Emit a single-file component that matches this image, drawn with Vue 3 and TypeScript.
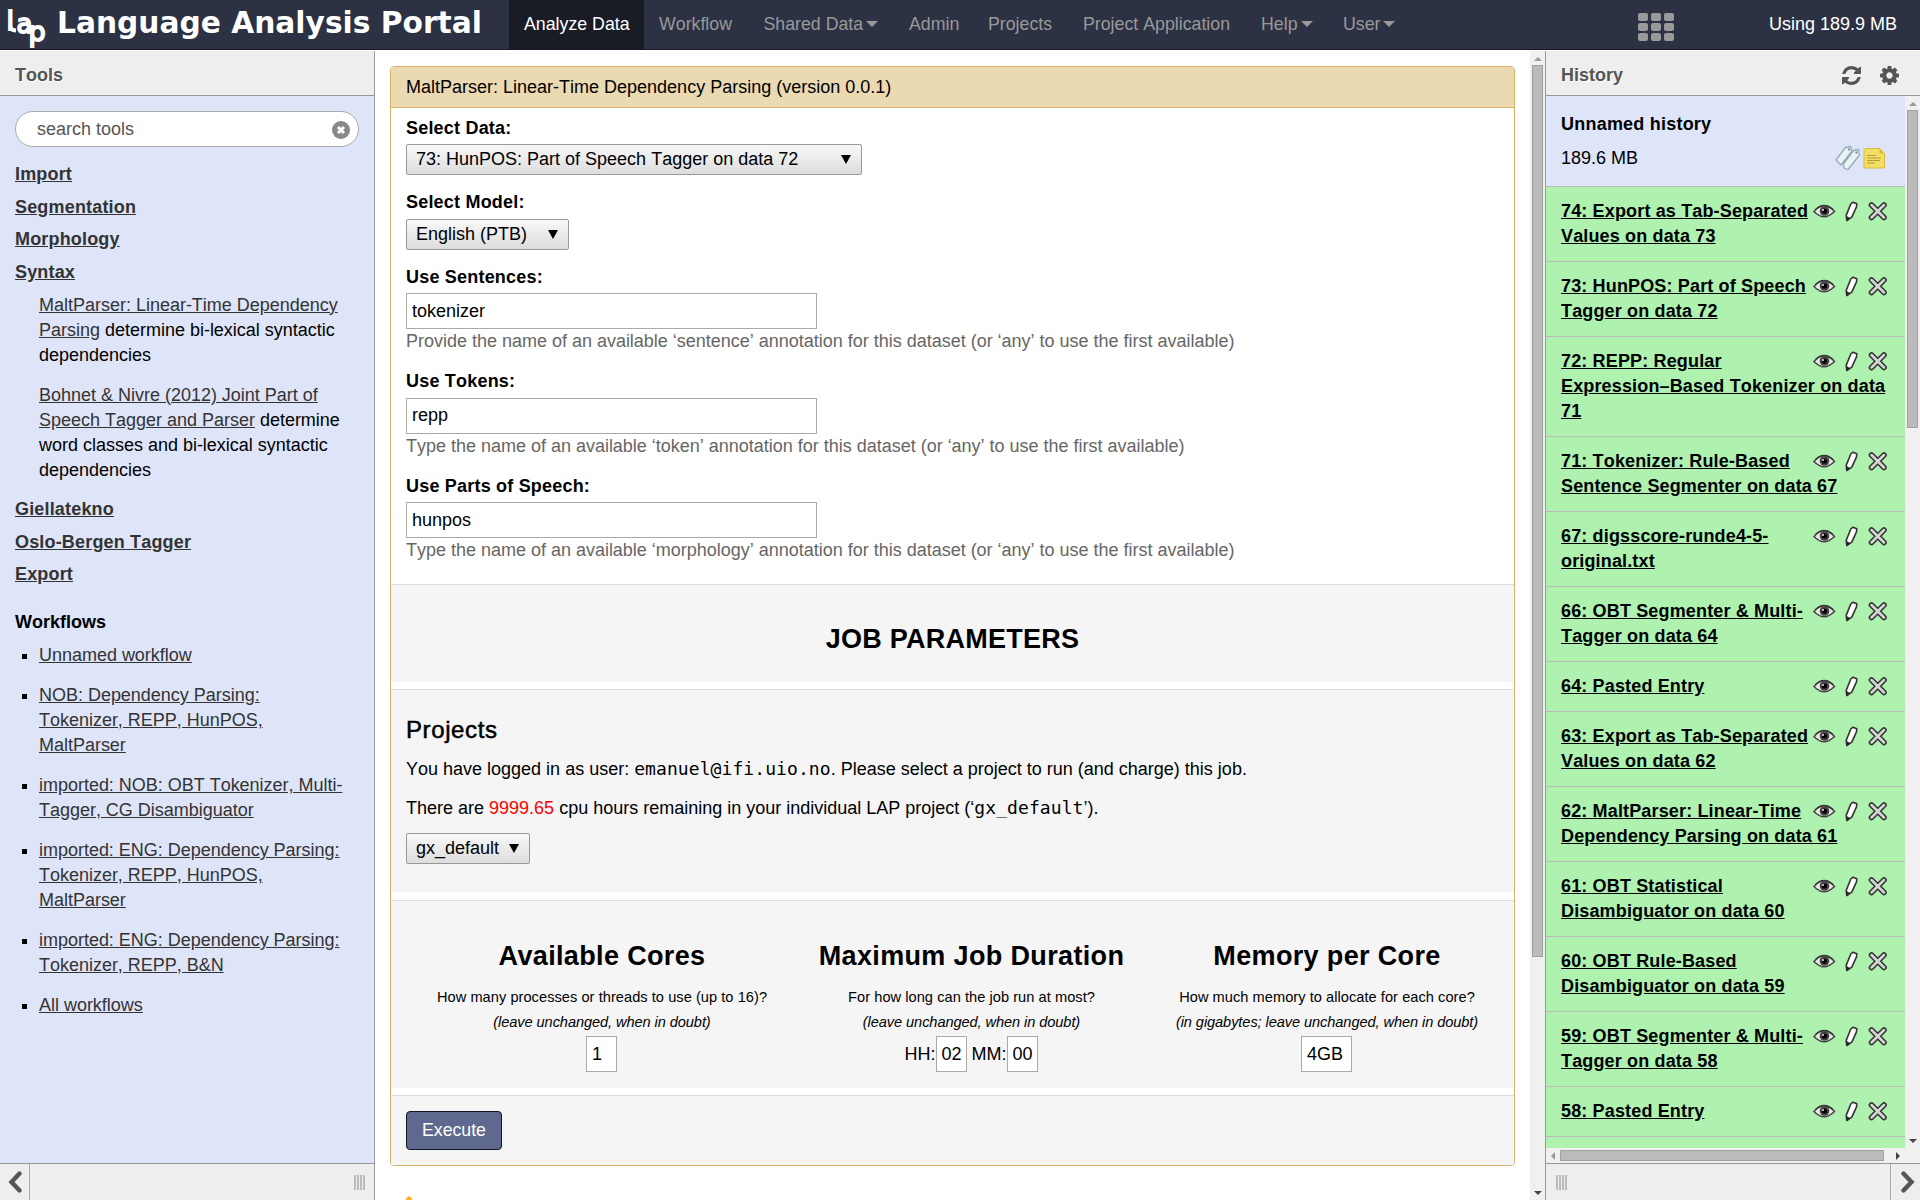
<script setup lang="ts">
interface NavItem { label: string; width: number; active?: boolean; caret?: boolean }
interface HistoryItem { id: number; name: string }

const nav: NavItem[] = [
  { label: 'Analyze Data', width: 135, active: true },
  { label: 'Workflow', width: 104.5 },
  { label: 'Shared Data', width: 145.5, caret: true },
  { label: 'Admin', width: 79 },
  { label: 'Projects', width: 95 },
  { label: 'Project Application', width: 178 },
  { label: 'Help', width: 82, caret: true },
  { label: 'User', width: 90, caret: true },
]

const sectionsTop = ['Import', 'Segmentation', 'Morphology', 'Syntax']
const sectionsBottom = ['Giellatekno', 'Oslo-Bergen Tagger', 'Export']
const tools = [
  { name: 'MaltParser: Linear-Time Dependency Parsing', text: 'determine bi-lexical syntactic dependencies' },
  { name: 'Bohnet & Nivre (2012) Joint Part of Speech Tagger and Parser', text: 'determine word classes and bi-lexical syntactic dependencies' },
]
const workflows = [
  'Unnamed workflow',
  'NOB: Dependency Parsing: Tokenizer, REPP, HunPOS, MaltParser',
  'imported: NOB: OBT Tokenizer, Multi-Tagger, CG Disambiguator',
  'imported: ENG: Dependency Parsing: Tokenizer, REPP, HunPOS, MaltParser',
  'imported: ENG: Dependency Parsing: Tokenizer, REPP, B&N',
  'All workflows',
]
const fields = [
  { label: 'Use Sentences:', value: 'tokenizer', help: 'Provide the name of an available ‘sentence’ annotation for this dataset (or ‘any’ to use the first available)' },
  { label: 'Use Tokens:', value: 'repp', help: 'Type the name of an available ‘token’ annotation for this dataset (or ‘any’ to use the first available)' },
  { label: 'Use Parts of Speech:', value: 'hunpos', help: 'Type the name of an available ‘morphology’ annotation for this dataset (or ‘any’ to use the first available)' },
]
const history: HistoryItem[] = [
  { id: 74, name: 'Export as Tab-Separated Values on data 73' },
  { id: 73, name: 'HunPOS: Part of Speech Tagger on data 72' },
  { id: 72, name: 'REPP: Regular Expression–Based Tokenizer on data 71' },
  { id: 71, name: 'Tokenizer: Rule-Based Sentence Segmenter on data 67' },
  { id: 67, name: 'digsscore-runde4-5-original.txt' },
  { id: 66, name: 'OBT Segmenter & Multi-Tagger on data 64' },
  { id: 64, name: 'Pasted Entry' },
  { id: 63, name: 'Export as Tab-Separated Values on data 62' },
  { id: 62, name: 'MaltParser: Linear-Time Dependency Parsing on data 61' },
  { id: 61, name: 'OBT Statistical Disambiguator on data 60' },
  { id: 60, name: 'OBT Rule-Based Disambiguator on data 59' },
  { id: 59, name: 'OBT Segmenter & Multi-Tagger on data 58' },
  { id: 58, name: 'Pasted Entry' },
]
</script>

<template>
  <div class="app">
    <header class="masthead">
      <svg class="logo" width="48" height="46" viewBox="0 0 48 46">
        <g fill="#fff" stroke="#fff" stroke-width="1.8" font-family="DejaVu Sans">
          <text x="4.500" y="27" font-size="27">l</text>
          <text x="14.500" y="30" font-size="26">a</text>
          <text x="26.500" y="38" font-size="27">p</text>
        </g>
        <path d="M8.500 23q0 4.500 5.500 4.500" fill="none" stroke="#fff" stroke-width="4" />
      </svg>
      <span class="brand">Language Analysis Portal</span>
      <nav class="nav">
        <a v-for="n in nav" :key="n.label" class="nav-item" :class="{ active: n.active }" :style="{ width: n.width + 'px' }">{{ n.label }}<i v-if="n.caret" class="caret"></i></a>
      </nav>
      <div class="apps"><i v-for="k in 9" :key="k"></i></div>
      <span class="quota">Using 189.9 MB</span>
    </header>

    <div class="body">
      <aside class="left">
        <div class="panel-head">Tools</div>
        <div class="left-body">
          <div class="search">
            <span>search tools</span>
            <svg width="18" height="18" viewBox="0 0 18 18"><circle cx="9" cy="9" r="9" fill="#888" /><path d="M6 6l6 6M12 6l-6 6" stroke="#fff" stroke-width="3" /></svg>
          </div>
          <a v-for="s in sectionsTop" :key="s" class="section">{{ s }}</a>
          <div class="tools">
            <p v-for="t in tools" :key="t.name"><a>{{ t.name }}</a> {{ t.text }}</p>
          </div>
          <a v-for="s in sectionsBottom" :key="s" class="section">{{ s }}</a>
          <div class="wf-title">Workflows</div>
          <ul class="workflows">
            <li v-for="w in workflows" :key="w"><a>{{ w }}</a></li>
          </ul>
        </div>
        <div class="panel-foot">
          <div class="collapse"><svg width="14" height="22" viewBox="0 0 14 22"><path d="M11.5 2.5L3.5 11l8 8.500" fill="none" stroke="#555" stroke-width="4.400" stroke-linecap="round" /></svg></div>
          <div class="grip"></div>
        </div>
      </aside>

      <main class="center">
        <div class="content">
          <section class="card">
            <div class="card-head">MaltParser: Linear-Time Dependency Parsing (version 0.0.1)</div>
            <div class="form">
              <label>Select Data:</label>
              <div class="select s1"><span>73: HunPOS: Part of Speech Tagger on data 72</span><i></i></div>
              <label>Select Model:</label>
              <div class="select s2"><span>English (PTB)</span><i></i></div>
              <template v-for="f in fields" :key="f.label">
                <label>{{ f.label }}</label>
                <input class="text" type="text" :value="f.value">
                <p class="help">{{ f.help }}</p>
              </template>
            </div>
            <div class="band job"><h2>JOB PARAMETERS</h2></div>
            <div class="band projects">
              <h3>Projects</h3>
              <p>You have logged in as user: <code>emanuel@ifi.uio.no</code>. Please select a project to run (and charge) this job.</p>
              <p>There are <em>9999.65</em> cpu hours remaining in your individual LAP project (‘<code>gx_default</code>’).</p>
              <div class="select s3"><span>gx_default</span><i></i></div>
            </div>
            <div class="band params">
              <div class="param">
                <h2>Available Cores</h2>
                <small>How many processes or threads to use (up to 16)?</small>
                <small class="it">(leave unchanged, when in doubt)</small>
                <div class="boxes"><input class="text w31" value="1"></div>
              </div>
              <div class="param">
                <h2>Maximum Job Duration</h2>
                <small>For how long can the job run at most?</small>
                <small class="it">(leave unchanged, when in doubt)</small>
                <div class="boxes"><span>HH:</span><input class="text w31" value="02"><span class="mm">MM:</span><input class="text w31" value="00"></div>
              </div>
              <div class="param">
                <h2>Memory per Core</h2>
                <small>How much memory to allocate for each core?</small>
                <small class="it">(in gigabytes; leave unchanged, when in doubt)</small>
                <div class="boxes"><input class="text w51" value="4GB"></div>
              </div>
            </div>
            <div class="band run"><button>Execute</button></div>
          </section>
          <svg class="warn" width="32" height="28" viewBox="0 0 32 28"><path d="M14 1.5q2-2.4 4 0l13 23q1 3-2 3H3q-3 0-2-3z" fill="#ffb320" /></svg>
        </div>
        <div class="vbar">
          <i class="up"></i><div class="thumb t-main"></div><i class="down"></i>
        </div>
      </main>

      <aside class="right">
        <div class="panel-head">
          <span>History</span>
          <svg class="hi" width="19" height="19" viewBox="0 0 1536 1536"><path fill="#555" d="M1511 928q0 5-1 7-64 268-268 434.5t-478 166.5q-146 0-282.5-55t-243.5-157l-129 129q-19 19-45 19t-45-19-19-45v-448q0-26 19-45t45-19h448q26 0 45 19t19 45-19 45l-137 137q71 66 161 102t187 36q134 0 250-65t186-179q11-17 53-117 8-23 30-23h192q13 0 22.5 9.5t9.5 22.5zm25-800v448q0 26-19 45t-45 19h-448q-26 0-45-19t-19-45 19-45l138-138q-148-137-349-137-134 0-250 65t-186 179q-11 17-53 117-8 23-30 23h-199q-13 0-22.5-9.5t-9.5-22.5v-7q65-268 270-434.5t480-166.5q146 0 284 55.5t245 156.5l130-129q19-19 45-19t45 19 19 45z" /></svg>
          <svg class="hi" width="19" height="19" viewBox="0 0 1536 1536"><path fill="#555" d="M1024 768q0-106-75-181t-181-75-181 75-75 181 75 181 181 75 181-75 75-181zm512-109v222q0 12-8 23t-20 13l-185 28q-19 54-39 91 35 50 107 138 10 12 10 25t-9 23q-27 37-99 108t-94 71q-12 0-26-9l-138-108q-44 23-91 38-16 136-29 186-7 28-36 28h-222q-14 0-24.5-8.5t-11.5-21.5l-28-184q-49-16-90-37l-141 107q-10 9-25 9-14 0-25-11-126-114-165-168-7-10-7-23 0-12 8-23 15-21 51-66.5t54-70.5q-27-50-41-99l-183-27q-13-2-21-12.5t-8-23.5v-222q0-12 8-23t19-13l186-28q14-46 39-92-40-57-107-138-10-12-10-24 0-10 9-23 26-36 98.5-107.5t94.5-71.5q13 0 26 10l138 107q44-23 91-38 16-136 29-186 7-28 36-28h222q14 0 24.5 8.5t11.5 21.5l28 184q49 16 90 37l142-107q9-9 24-9 13 0 25 10 129 119 165 170 7 8 7 22 0 12-8 23-15 21-51 66.5t-54 70.5q26 50 41 98l183 28q13 2 21 12.5t8 23.5z" /></svg>
        </div>
        <div class="right-body">
          <div class="hist">
            <div class="hist-head">
              <b>Unnamed history</b>
              <div class="size"><span>189.6 MB</span>
                <svg width="50" height="28" viewBox="0 0 50 28">
                  <g fill="#e9f3f4" stroke="#93abb5" stroke-width="1.3" stroke-linejoin="round">
                    <path d="M1 16L10.500 3.500 15.500 2.500 17 7 6 21z" />
                    <path d="M8 20.500L18.500 6.500l5-1 1 5.500L13 25.500 9.500 24.500z" />
                  </g>
                  <circle cx="14" cy="5.500" r="1.200" fill="#7f9aa5" /><circle cx="21.500" cy="8.500" r="1.200" fill="#7f9aa5" />
                  <path d="M30 4.500h14.500l5 5V24H29V5.500z" fill="#f2de63" stroke="#d9b93f" />
                  <path d="M44.500 4.500v5h5z" fill="#d9bb3c" />
                  <path d="M32 11.500h9M32 14h14M32 16.500h13M32 19h8" stroke="#b59c3c" stroke-width="1" />
                </svg>
              </div>
            </div>
            <div v-for="h in history" :key="h.id" class="item">
              <svg class="acts" width="78" height="22" viewBox="0 0 78 22">
                <path d="M2 11.500Q12 0 22.500 11.500Q12 22 2 11.500z" fill="#e8e8e8" stroke="#444" stroke-width="1.500" />
                <path d="M3.500 9.500Q12 1.500 21 9.500" fill="none" stroke="#333" stroke-width="1.600" />
                <circle cx="12.500" cy="11" r="4.800" fill="#444" /><circle cx="12.500" cy="11" r="2.600" fill="#000" /><circle cx="11" cy="10" r="1.100" fill="#ddd" />
                <path d="M41 2.200l3.800 1.600-.3 3-4.700 10.400-5 3.400-.6-5.200L38.800 4z" fill="#fff" stroke="#333" stroke-width="1.600" stroke-linejoin="round" />
                <path d="M34.500 16l3.500 2-3 2.300z" fill="#222" />
                <path d="M59.500 5l12.500 12.500M72 5L59.500 17.500" stroke="#333" stroke-width="5.600" stroke-linecap="round" />
                <path d="M59.500 5l12.500 12.500M72 5L59.500 17.500" stroke="#d6d6d6" stroke-width="2.500" stroke-linecap="round" />
              </svg>
              <a>{{ h.id }}: {{ h.name }}</a>
            </div>
          </div>
          <div class="vbar side"><i class="up"></i><div class="thumb t-side"></div><i class="down"></i></div>
        </div>
        <div class="hbar"><i class="lt"></i><div class="hthumb"></div><i class="rt"></i></div>
        <div class="panel-foot rfoot">
          <div class="grip"></div>
          <div class="collapse"><svg width="14" height="22" viewBox="0 0 14 22"><path d="M2.500 2.500l8 8.500-8 8.500" fill="none" stroke="#555" stroke-width="4.400" stroke-linecap="round" /></svg></div>
        </div>
      </aside>
    </div>
  </div>
</template>

<style>
html, body { margin: 0; overflow: hidden; }
</style>

<style scoped>
* { box-sizing: border-box; }
.app { width: 1920px; height: 1200px; overflow: hidden; display: flex; flex-direction: column; background: #fff; color: #000; font: 18px/25px "Liberation Sans", Arial, sans-serif; font-kerning: none; }
p, h2, h3, ul { margin: 0; padding: 0; }
.masthead { height: 50px; flex: none; margin-bottom: 1px; background: #2c3143; border-bottom: 1px solid #191b25; display: flex; align-items: flex-start; }
.logo { margin: 3px 0 0 2px; flex: none; }
.brand { width: 452px; margin-left: 7px; flex: none; font: bold 29.700px/36px "DejaVu Sans", sans-serif; color: #fff; padding-top: 5px; white-space: nowrap; }
.nav { display: flex; }
.nav-item { height: 49px; padding: 12px 0 0 15px; color: #999; white-space: nowrap; font-size: 17.750px; }
.nav-item.active { background: #191b25; color: #fff; }
.caret { display: inline-block; border: 6px solid transparent; border-top-color: #999; border-bottom: 0; margin-left: 3px; vertical-align: 3px; }
.apps { display: grid; grid-template-columns: repeat(3, 10px); grid-auto-rows: 8px; gap: 2px 3px; margin: 13px 0 0 220px; }
.apps i { background: #999; border-radius: 2px; }
.quota { margin: 12px 23px 0 auto; color: #fff; }

.body { display: flex; height: 1149px; }
.left { width: 375px; border-right: 1px solid #999; display: flex; flex-direction: column; background: #dfe5f9; }
.panel-head { height: 45px; flex: none; background: #eee; border-bottom: 1px solid #999; padding: 12px 15px 0; font-weight: bold; color: #555; text-shadow: 1px 1px 0 #fff; display: flex; }
.left-body { flex: 1; padding: 15px; font-size: 18px; min-height: 0; }
.search { height: 36px; border: 1px solid #aaa; border-radius: 18px; background: #fff; margin-bottom: 15px; display: flex; align-items: center; justify-content: space-between; padding: 0 8px 0 21px; color: #555; }
.search svg { margin-top: 2px; }
.section { display: block; width: max-content; font-weight: bold; letter-spacing: .17px; margin-bottom: 7.700px; color: #333; text-decoration: underline; }
.tools { padding-left: 24px; width: 333px; margin-bottom: 14.300px; letter-spacing: -.01px; }
.tools p + p { margin-top: 15px; }
.tools a, .workflows a { color: #333; text-decoration: underline; }
.wf-title { font-weight: bold; margin: 22.700px 0 8px; }
.workflows { list-style: none; width: 333px; letter-spacing: -.02px; }
.workflows li { padding-left: 24px; margin-bottom: 15px; position: relative; }
.workflows li::before { content: ""; position: absolute; left: 7px; top: 11px; width: 5px; height: 5px; background: #000; }
.panel-foot { height: 37px; flex: none; border-top: 1px solid #999; background: #eee; display: flex; justify-content: space-between; }
.collapse { width: 30px; border-right: 1px solid #aaa; padding: 7px 0 0 8px; }
.grip { width: 11px; height: 15px; margin: 11px 9px 0; background: repeating-linear-gradient(90deg, #bbb 0 2px, #eee 2px 3px); }
.rfoot .collapse { border-right: 0; border-left: 1px solid #aaa; width: 30px; padding-left: 10px; }
.rfoot .grip { margin-left: 10px; }

.center { width: 1170px; display: flex; }
.content { width: 1155px; padding: 15px; overflow: hidden; }
.card { width: 1125px; height: 1100px; border: 1px solid #d8b365; border-radius: 4px; overflow: hidden; display: flex; flex-direction: column; }
.card-head { height: 41px; flex: none; background: #ebd9b2; border-bottom: 1px solid #d8b365; padding: 8px 15px; }
.form { height: 476px; flex: none; padding: 8px 15px 0; }
label { display: block; font-weight: bold; letter-spacing: .2px; margin-bottom: 3.450px; }
.select { height: 31px; border: 1px solid #999; border-radius: 2px; background: linear-gradient(#f8f8f8, #ddd); display: flex; align-items: center; justify-content: space-between; padding: 0 10px 0 9px; margin-bottom: 15px; white-space: nowrap; }
.select i { border: 5px solid transparent; border-top: 9px solid #000; border-bottom: 0; }
.s1 { width: 456px; }
.s2 { width: 163px; }
.s3 { width: 124px; }
.text { display: block; width: 411px; height: 36px; border: 1px solid #aaa; background: #fff; padding: 0 5px; font: 18px/25px "Liberation Sans", Arial, sans-serif; color: #000; }
.help { color: #666; margin-bottom: 15.100px; white-space: nowrap; letter-spacing: -.01px; }
.band { background: #f5f5f5; border-top: 1px solid #ddd; flex: none; }
h2 { font: bold 27px/34px "Liberation Sans", Arial, sans-serif; text-align: center; letter-spacing: .35px; }
.job { height: 98px; padding-top: 37px; margin-bottom: 7px; }
.job h2 { letter-spacing: .26px; }
.projects { height: 203px; padding: 24px 15px 0; margin-bottom: 8px; }
h3 { font: normal 24px/32px "Liberation Sans", Arial, sans-serif; letter-spacing: .6px; margin-bottom: 11px; -webkit-text-stroke: .5px #000; }
.projects p { margin-bottom: 14px; white-space: nowrap; }
.projects p + p { margin-bottom: 11.500px; }
code { font: 18px/20px "DejaVu Sans Mono", monospace; letter-spacing: .08px; }
em { font-style: normal; color: #f00; }
.params { height: 188px; margin-bottom: 7px; display: grid; grid-template-columns: 392px 347px 364px; padding: 38px 0 0 15px; }
.param { display: flex; flex-direction: column; align-items: center; }
.param h2 { margin-bottom: 12px; }
small { font-size: 14.600px; white-space: nowrap; letter-spacing: .05px; }
small.it { font-style: italic; letter-spacing: -.08px; }
.boxes { display: flex; align-items: center; margin: 1px 1px 0 0; }
.w31 { width: 31px; }
.w51 { width: 51px; }
.mm { margin-left: 5px; }
.run { flex: 1; padding: 15px; }
button { width: 96px; height: 39px; padding: 0; border: 1px solid #111522; border-radius: 4px; background: #5f6990; color: #fff; font: 17.700px/25px "Liberation Sans", Arial, sans-serif; }
.warn { display: block; margin: 30px 0 0 3px; }

.vbar { width: 15px; background: #f0f0f0; display: flex; flex-direction: column; align-items: center; }
.vbar i { border: 4px solid transparent; }
.vbar .up { border-bottom: 4px solid #999; border-top: 0; margin-top: 6px; }
.vbar .down { border-top: 4px solid #444; border-bottom: 0; margin: auto 0 5px; }
.thumb { width: 11px; background: #bbb; border: 1px solid #a0a0a0; margin-top: 4px; }
.t-main { height: 892px; }
.t-side { height: 318px; }

.right { width: 375px; border-left: 1px solid #999; display: flex; flex-direction: column; background: #dfe5f9; }
.right .panel-head span { margin-right: auto; }
.hi { margin: 3px 0 0 19px; }
.right .panel-head { padding-right: 21px; }
.right-body { height: 1052px; display: flex; }
.hist { width: 359px; overflow: hidden; background: #aff1af; }
.hist-head { height: 91px; padding: 16px 15px 0; background: #dfe5f9; border-bottom: 1px solid #bbb; }
.hist-head b { display: block; margin-bottom: 9px; letter-spacing: .22px; }
.size { display: flex; justify-content: space-between; }
.size svg { margin-right: 5px; margin-top: -2px; }
.item { border-bottom: 1px solid #bbb; padding: 12px 15px; font-weight: bold; letter-spacing: .15px; }
.item a { text-decoration: underline; }
.acts { float: right; margin: 1px 0 0; }
.side { width: 15px; }
.hbar { height: 15px; background: #f0f0f0; display: flex; align-items: center; }
.hbar i { border: 4px solid transparent; }
.hbar .lt { border-right: 4px solid #999; border-left: 0; margin-left: 5px; }
.hthumb { width: 324px; height: 11px; background: #bbb; border: 1px solid #a0a0a0; margin-left: 5px; }
.hbar .rt { border-left: 4px solid #444; border-right: 0; margin-left: 12px; }
</style>
